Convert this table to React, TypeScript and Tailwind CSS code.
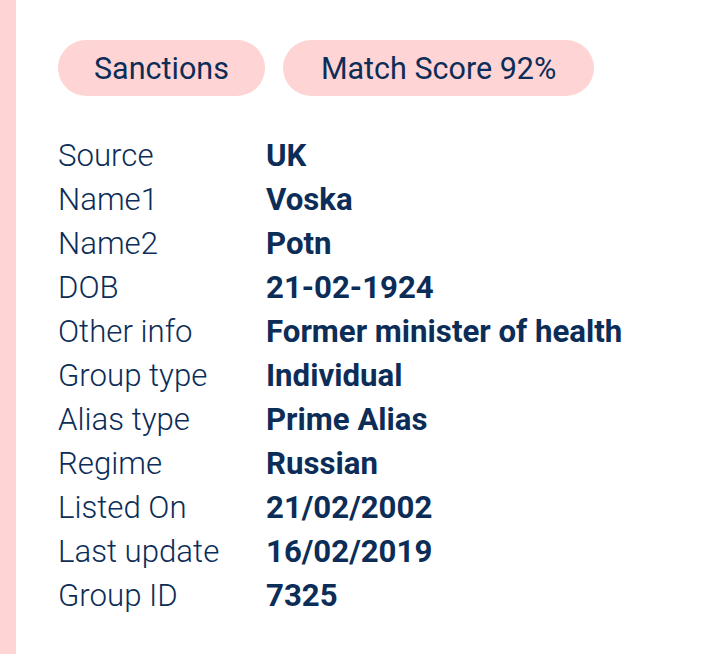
const ROWS = [
  ["Source", "UK"],
  ["Name1", "Voska"],
  ["Name2", "Potn"],
  ["DOB", "21-02-1924"],
  ["Other info", "Former minister of health"],
  ["Group type", "Individual"],
  ["Alias type", "Prime Alias"],
  ["Regime", "Russian"],
  ["Listed On", "21/02/2002"],
  ["Last update", "16/02/2019"],
  ["Group ID", "7325"],
];

export default function App() {
  return (
    <div className="flex h-[654px] w-[720px] bg-white font-['Roboto',sans-serif] text-[#0c2d57]">
      <div className="w-4 shrink-0 bg-[#ffd4d4]" />
      <div className="flex flex-col pl-[42px] pt-10">
        {/* Tags */}
        <div className="flex gap-[18px]">
          <span className="flex h-14 items-center rounded-full bg-[#ffd4d4] px-[36px] pt-[2px] text-[30.5px]">
            Sanctions
          </span>
          <span className="flex h-14 items-center rounded-full bg-[#ffd4d4] px-[38px] pt-[2px] text-[30.5px]">
            Match Score 92%
          </span>
        </div>

        {/* Details */}
        <div className="mt-[38px] grid grid-cols-[208px_1fr] text-[31.2px] leading-[44px]">
          {ROWS.map(([label, value]) => (
            <div key={label} className="contents">
              <div className="font-light">{label}</div>
              <div className="font-bold">{value}</div>
            </div>
          ))}
        </div>
      </div>
    </div>
  );
}
